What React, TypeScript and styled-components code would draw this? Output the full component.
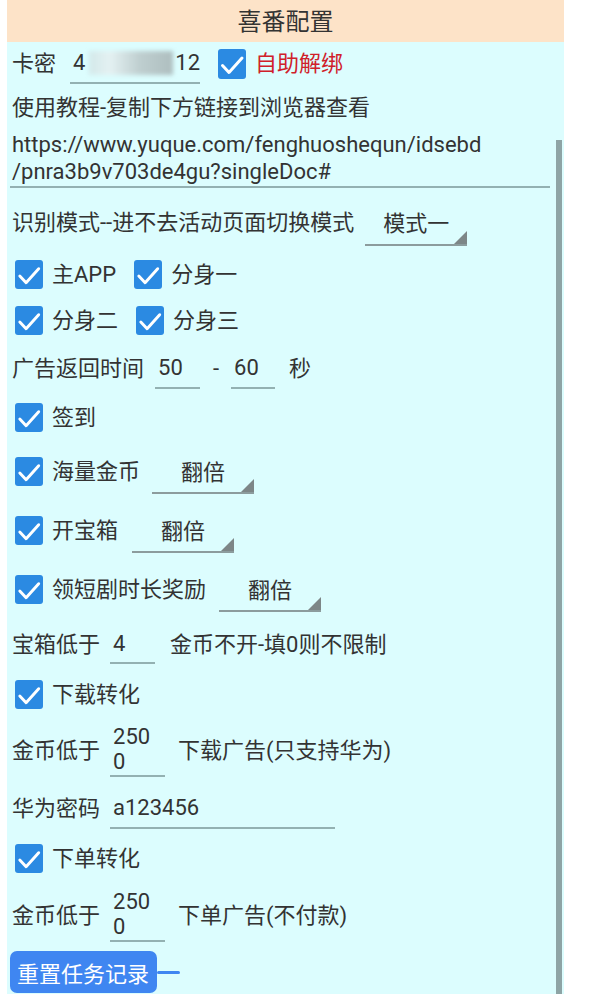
import React from 'react';
import styled, { createGlobalStyle } from 'styled-components';

const GlobalStyle = createGlobalStyle`
  html, body {
    margin: 0;
    padding: 0;
    background: #ffffff;
  }
  body {
    font-family: Roboto, "Noto Sans CJK SC", sans-serif;
    color: #333333;
  }
`;

const Panel = styled.div`
  position: relative;
  width: 557px;
  min-height: 994px;
  margin-left: 7px;
  background-color: #dcfdfe;
  overflow: hidden;
`;

const Header = styled.div`
  height: 42px;
  box-sizing: border-box;
  padding-bottom: 3px;
  display: flex;
  align-items: center;
  justify-content: center;
  background-color: #fde3c8;
  font-size: 24px;
  color: #333333;
`;

const Content = styled.div`
  padding-left: 5px;
`;

const Row = styled.div<{ $h: number }>`
  height: ${(p) => p.$h}px;
  display: flex;
  align-items: center;
`;

const Label = styled.span<{ $ml?: number; $color?: string }>`
  margin-left: ${(p) => p.$ml ?? 0}px;
  font-size: 22px;
  line-height: 27px;
  white-space: nowrap;
  color: ${(p) => p.$color ?? '#333333'};
`;

const Box = styled.div<{ $ml?: number; $big?: boolean }>`
  width: 28px;
  height: ${(p) => (p.$big ? 30 : 29)}px;
  margin-left: ${(p) => p.$ml ?? 3}px;
  margin-right: 9px;
  border-radius: 3px;
  background-color: #2b8ae2;
  flex-shrink: 0;

  svg {
    display: block;
    width: 100%;
    height: 100%;
  }
`;

const EditField = styled.div<{ $w: number; $h: number; $ml: number }>`
  width: ${(p) => p.$w}px;
  height: ${(p) => p.$h}px;
  margin-left: ${(p) => p.$ml}px;
  box-sizing: border-box;
  padding-left: 3px;
  border-bottom: 2px solid #93b1b2;
  display: flex;
  flex-direction: column;
  justify-content: center;
  font-size: 22px;
  line-height: 25px;
  color: #333333;
  flex-shrink: 0;
`;

const SecretLine = styled.div`
  display: flex;
  align-items: center;
`;

const Blurred = styled.span`
  display: inline-block;
  width: 84px;
  height: 24px;
  margin: 0 2px 0 4px;
  background: linear-gradient(90deg, #d3e9ea 0%, #e4f1f2 25%, #bfcfd0 60%, #aebebf 100%);
  filter: blur(2px);
`;

const Spinner = styled.div<{ $h: number; $ml: number }>`
  position: relative;
  width: 102px;
  height: ${(p) => p.$h}px;
  margin-left: ${(p) => p.$ml}px;
  box-sizing: border-box;
  border-bottom: 2px solid #8c9c9d;
  display: flex;
  align-items: center;
  justify-content: center;
  font-size: 22px;
  color: #333333;
  flex-shrink: 0;

  &::after {
    content: '';
    position: absolute;
    right: 0;
    bottom: 0;
    width: 0;
    height: 0;
    border-left: 13px solid transparent;
    border-bottom: 13px solid #7d8687;
  }
`;

const UrlBlock = styled.div`
  width: 538px;
  margin: 0 0 3px -2px;
  padding: 2px 0 1px 2px;
  border-bottom: 2px solid #93b1b2;
  font-size: 22px;
  line-height: 27px;
  color: #333333;
`;

const ButtonRow = styled.div`
  margin: 3px 0 0 -2px;
  display: flex;
  align-items: center;
`;

const ResetButton = styled.button`
  height: 42px;
  padding: 0 8px 0 7px;
  border: none;
  border-radius: 7px;
  background-color: #3f86f1;
  color: #ffffff;
  font-family: Roboto, "Noto Sans CJK SC", sans-serif;
  font-size: 22px;
`;

const ButtonTail = styled.div`
  width: 23px;
  height: 3px;
  border-radius: 2px;
  background-color: #3f86f1;
`;

const ScrollThumb = styled.div`
  position: absolute;
  top: 140px;
  bottom: 0;
  right: 2px;
  width: 6px;
  background-color: #8ea4a5;
`;

const Check: React.FC<{ big?: boolean; ml?: number }> = ({ big, ml }) => (
  <Box $big={big} $ml={ml}>
    <svg viewBox="0 0 28 30" fill="none">
      <path d="M4.5 16.5l6.5 7L24 9" stroke="#ffffff" strokeWidth="3" strokeLinecap="round" strokeLinejoin="round" />
    </svg>
  </Box>
);

const App: React.FC = () => {
  return (
    <>
      <GlobalStyle />
      <Panel>
        <Header>喜番配置</Header>
        <Content>
          <Row $h={43}>
            <Label>卡密</Label>
            <EditField $w={130} $h={40} $ml={14}>
              <SecretLine>
                4<Blurred />12
              </SecretLine>
            </EditField>
            <Check big ml={18} />
            <Label $color="#d0202a">自助解绑</Label>
          </Row>

          <Row $h={44}>
            <Label>使用教程-复制下方链接到浏览器查看</Label>
          </Row>

          <UrlBlock>
            https://www.yuque.com/fenghuoshequn/idsebd
            <br />
            /pnra3b9v703de4gu?singleDoc#
          </UrlBlock>

          <Row $h={62}>
            <Label>识别模式--进不去活动页面切换模式</Label>
            <Spinner $h={48} $ml={11}>模式一</Spinner>
          </Row>

          <Row $h={43}>
            <Check />
            <Label>主APP</Label>
            <Check ml={18} />
            <Label>分身一</Label>
          </Row>

          <Row $h={48}>
            <Check />
            <Label>分身二</Label>
            <Check ml={18} />
            <Label>分身三</Label>
          </Row>

          <Row $h={48}>
            <Label>广告返回时间</Label>
            <EditField $w={45} $h={42} $ml={11}>50</EditField>
            <Label $ml={13}>-</Label>
            <EditField $w={44} $h={42} $ml={12}>60</EditField>
            <Label $ml={14}>秒</Label>
          </Row>

          <Row $h={50}>
            <Check />
            <Label>签到</Label>
          </Row>

          <Row $h={58}>
            <Check />
            <Label>海量金币</Label>
            <Spinner $h={46} $ml={12}>翻倍</Spinner>
          </Row>

          <Row $h={60}>
            <Check />
            <Label>开宝箱</Label>
            <Spinner $h={46} $ml={14}>翻倍</Spinner>
          </Row>

          <Row $h={58}>
            <Check />
            <Label>领短剧时长奖励</Label>
            <Spinner $h={46} $ml={13}>翻倍</Spinner>
          </Row>

          <Row $h={52}>
            <Label>宝箱低于</Label>
            <EditField $w={45} $h={40} $ml={10}>4</EditField>
            <Label $ml={15}>金币不开-填0则不限制</Label>
          </Row>

          <Row $h={48}>
            <Check />
            <Label>下载转化</Label>
          </Row>

          <Row $h={64}>
            <Label>金币低于</Label>
            <EditField $w={55} $h={54} $ml={10}>
              <span>250</span>
              <span>0</span>
            </EditField>
            <Label $ml={13}>下载广告(只支持华为)</Label>
          </Row>

          <Row $h={52}>
            <Label>华为密码</Label>
            <EditField $w={225} $h={42} $ml={10}>a123456</EditField>
          </Row>

          <Row $h={48}>
            <Check />
            <Label>下单转化</Label>
          </Row>

          <Row $h={66}>
            <Label>金币低于</Label>
            <EditField $w={55} $h={54} $ml={10}>
              <span>250</span>
              <span>0</span>
            </EditField>
            <Label $ml={13}>下单广告(不付款)</Label>
          </Row>

          <ButtonRow>
            <ResetButton>重置任务记录</ResetButton>
            <ButtonTail />
          </ButtonRow>
        </Content>
        <ScrollThumb />
      </Panel>
    </>
  );
};

export default App;
